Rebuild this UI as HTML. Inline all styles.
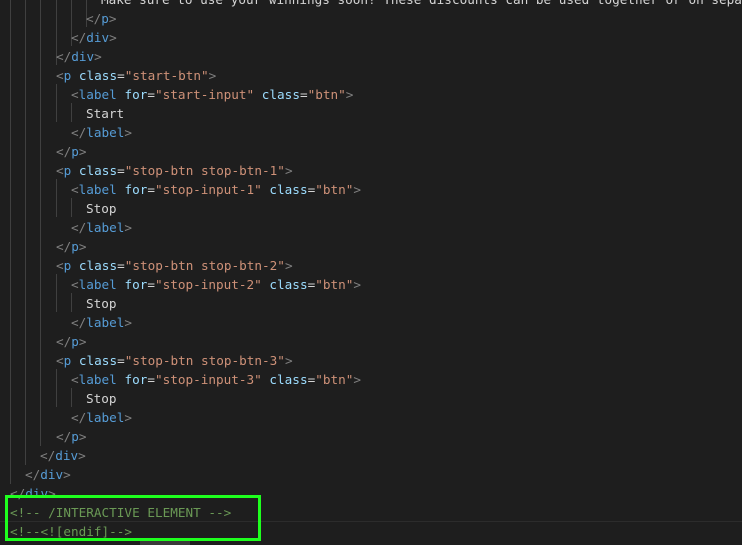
<!DOCTYPE html>
<html><head><style>
html,body{margin:0;padding:0;background:#1e1e1e;width:742px;height:545px;overflow:hidden}
.ed{position:relative;width:742px;height:545px;font-family:"DejaVu Sans Mono","Liberation Mono",monospace;font-size:12.68px;}
.l{position:absolute;left:0;height:19px;line-height:19px;white-space:pre;color:#d4d4d4}
.g{position:absolute;width:1px;background:#404040}
.b{color:#808080}.t{color:#569cd6}.a{color:#9cdcfe}.s{color:#ce9178}.c{color:#6a9955}
</style></head><body><div class="ed">
<div class="g" style="left:10px;top:0;height:484px"></div>
<div class="g" style="left:25px;top:0;height:465px"></div>
<div class="g" style="left:40px;top:0;height:446px"></div>
<div class="g" style="left:56px;top:0;height:65px"></div>
<div class="g" style="left:71px;top:0;height:46px"></div>
<div class="g" style="left:86px;top:0;height:27px"></div>
<div class="g" style="left:56px;top:84px;height:38px"></div>
<div class="g" style="left:71px;top:103px;height:19px"></div>
<div class="g" style="left:56px;top:179px;height:38px"></div>
<div class="g" style="left:71px;top:198px;height:19px"></div>
<div class="g" style="left:56px;top:274px;height:38px"></div>
<div class="g" style="left:71px;top:293px;height:19px"></div>
<div class="g" style="left:56px;top:369px;height:38px"></div>
<div class="g" style="left:71px;top:388px;height:19px"></div>
<div style="position:absolute;left:0;top:521px;width:742px;height:1px;background:#2c2c2c"></div>
<div style="position:absolute;left:140px;top:541px;width:50px;height:4px;background:#3a3a3a"></div>

<div class="l" style="top:-10px;left:101px">Make sure to use your winnings soon! These discounts can be used together or on sepa</div>
<div class="l" style="top:9px;left:86px"><span class="b">&lt;/</span><span class="t">p</span><span class="b">&gt;</span></div>
<div class="l" style="top:28px;left:71px"><span class="b">&lt;/</span><span class="t">div</span><span class="b">&gt;</span></div>
<div class="l" style="top:47px;left:56px"><span class="b">&lt;/</span><span class="t">div</span><span class="b">&gt;</span></div>

<div class="l" style="top:66px;left:56px"><span class="b">&lt;</span><span class="t">p</span> <span class="a">class</span>=<span class="s">"start-btn"</span><span class="b">&gt;</span></div>
<div class="l" style="top:85px;left:71px"><span class="b">&lt;</span><span class="t">label</span> <span class="a">for</span>=<span class="s">"start-input"</span> <span class="a">class</span>=<span class="s">"btn"</span><span class="b">&gt;</span></div>
<div class="l" style="top:104px;left:86px">Start</div>
<div class="l" style="top:123px;left:71px"><span class="b">&lt;/</span><span class="t">label</span><span class="b">&gt;</span></div>
<div class="l" style="top:142px;left:56px"><span class="b">&lt;/</span><span class="t">p</span><span class="b">&gt;</span></div>

<div class="l" style="top:161px;left:56px"><span class="b">&lt;</span><span class="t">p</span> <span class="a">class</span>=<span class="s">"stop-btn stop-btn-1"</span><span class="b">&gt;</span></div>
<div class="l" style="top:180px;left:71px"><span class="b">&lt;</span><span class="t">label</span> <span class="a">for</span>=<span class="s">"stop-input-1"</span> <span class="a">class</span>=<span class="s">"btn"</span><span class="b">&gt;</span></div>
<div class="l" style="top:199px;left:86px">Stop</div>
<div class="l" style="top:218px;left:71px"><span class="b">&lt;/</span><span class="t">label</span><span class="b">&gt;</span></div>
<div class="l" style="top:237px;left:56px"><span class="b">&lt;/</span><span class="t">p</span><span class="b">&gt;</span></div>

<div class="l" style="top:256px;left:56px"><span class="b">&lt;</span><span class="t">p</span> <span class="a">class</span>=<span class="s">"stop-btn stop-btn-2"</span><span class="b">&gt;</span></div>
<div class="l" style="top:275px;left:71px"><span class="b">&lt;</span><span class="t">label</span> <span class="a">for</span>=<span class="s">"stop-input-2"</span> <span class="a">class</span>=<span class="s">"btn"</span><span class="b">&gt;</span></div>
<div class="l" style="top:294px;left:86px">Stop</div>
<div class="l" style="top:313px;left:71px"><span class="b">&lt;/</span><span class="t">label</span><span class="b">&gt;</span></div>
<div class="l" style="top:332px;left:56px"><span class="b">&lt;/</span><span class="t">p</span><span class="b">&gt;</span></div>

<div class="l" style="top:351px;left:56px"><span class="b">&lt;</span><span class="t">p</span> <span class="a">class</span>=<span class="s">"stop-btn stop-btn-3"</span><span class="b">&gt;</span></div>
<div class="l" style="top:370px;left:71px"><span class="b">&lt;</span><span class="t">label</span> <span class="a">for</span>=<span class="s">"stop-input-3"</span> <span class="a">class</span>=<span class="s">"btn"</span><span class="b">&gt;</span></div>
<div class="l" style="top:389px;left:86px">Stop</div>
<div class="l" style="top:408px;left:71px"><span class="b">&lt;/</span><span class="t">label</span><span class="b">&gt;</span></div>
<div class="l" style="top:427px;left:56px"><span class="b">&lt;/</span><span class="t">p</span><span class="b">&gt;</span></div>

<div class="l" style="top:446px;left:40px"><span class="b">&lt;/</span><span class="t">div</span><span class="b">&gt;</span></div>
<div class="l" style="top:465px;left:25px"><span class="b">&lt;/</span><span class="t">div</span><span class="b">&gt;</span></div>
<div class="l" style="top:484px;left:10px"><span class="b">&lt;/</span><span class="t">div</span><span class="b">&gt;</span></div>
<div class="l c" style="top:503px;left:10px">&lt;!-- /INTERACTIVE ELEMENT --&gt;</div>
<div class="l c" style="top:522px;left:10px">&lt;!--&lt;![endif]--&gt;</div>
<div style="position:absolute;left:5px;top:495px;width:250px;height:40px;border:3px solid #1eff1e"></div>
</div></body></html>
